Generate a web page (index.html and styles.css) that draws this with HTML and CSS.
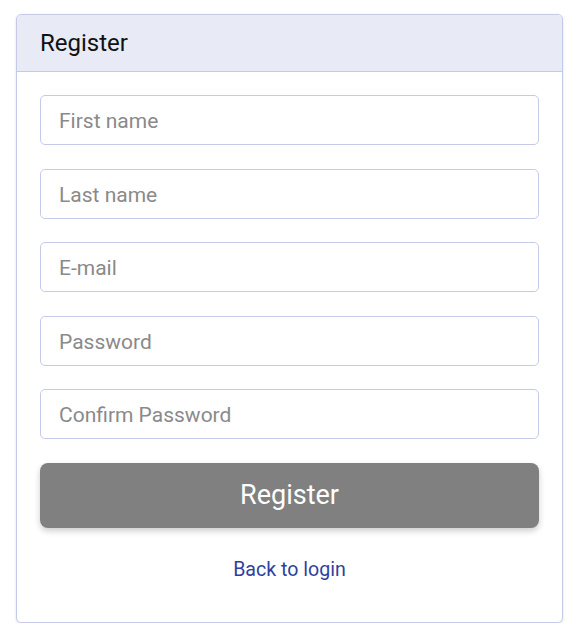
FILE: index.html
```html
<!DOCTYPE html>
<html>
<head>
<meta charset="utf-8">
<link rel="stylesheet" href="styles.css">
</head>
<body>
<div class="card">
  <div class="card-header">Register</div>
  <form class="card-body">
    <input class="field" type="text" placeholder="First name">
    <input class="field" type="text" placeholder="Last name">
    <input class="field" type="email" placeholder="E-mail">
    <input class="field" type="password" placeholder="Password">
    <input class="field" type="password" placeholder="Confirm Password">
    <button class="btn" type="button">Register</button>
    <div class="back"><a href="#">Back to login</a></div>
  </form>
</div>
</body>
</html>
```

FILE: styles.css
```css
html, body {
  margin: 0;
  background: #ffffff;
  font-family: Roboto, "Liberation Sans", sans-serif;
}
body {
  padding: 14px 0 0 16px;
}
.card {
  width: 547px;
  box-sizing: border-box;
  border: 1px solid #c5cae9;
  border-radius: 5px;
  background: #fff;
  box-shadow: 0 1px 3px rgba(0,0,0,0.12);
  overflow: hidden;
}
.card-header {
  background: #e8eaf6;
  border-bottom: 1px solid #c5cae9;
  height: 57px;
  box-sizing: border-box;
  padding: 0 23px;
  font-size: 24px;
  line-height: 56px;
  color: #111;
}
.card-body {
  margin: 0;
  padding: 23px 23px 0;
  display: flex;
  flex-direction: column;
  gap: 23.5px;
}
.field {
  height: 50px;
  box-sizing: border-box;
  border: 1px solid #c5cae9;
  border-radius: 5px;
  padding: 2px 18px 0;
  font-family: Roboto, "Liberation Sans", sans-serif;
  font-size: 21px;
  color: #333;
  outline: none;
}
.field::placeholder {
  color: #8a8a8a;
}
.btn {
  height: 65px;
  border: none;
  border-radius: 8px;
  background: #808080;
  color: #fff;
  font-family: Roboto, "Liberation Sans", sans-serif;
  font-size: 27px;
  box-shadow: 0 3px 6px rgba(0,0,0,0.2);
  cursor: pointer;
}
.back {
  text-align: center;
  margin-top: 4px;
  padding-bottom: 37px;
  font-size: 19.6px;
  line-height: 30px;
}
.back a {
  color: #303f9f;
  text-decoration: none;
}
```
